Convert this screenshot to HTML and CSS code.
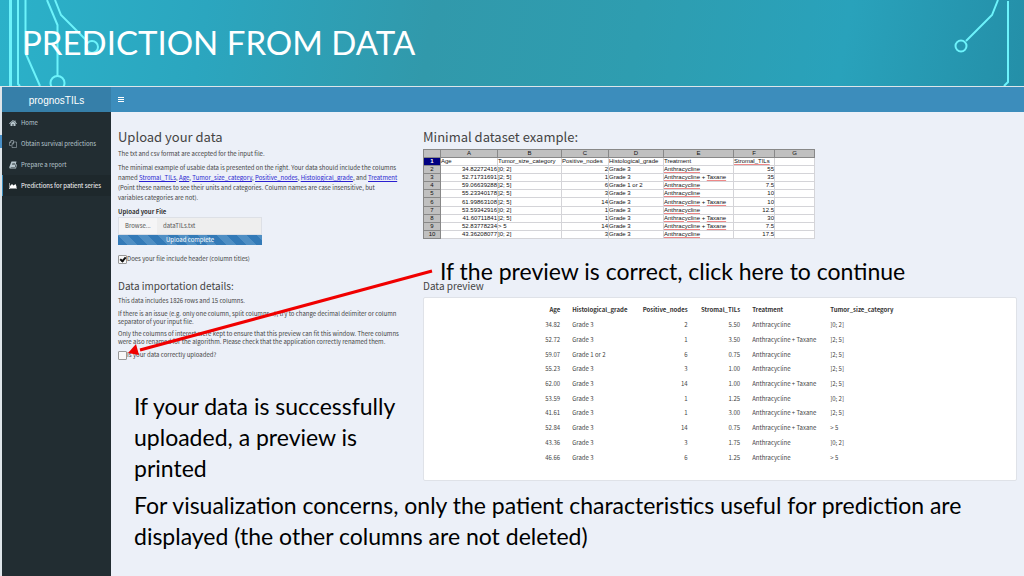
FILE: index.html
```
<!DOCTYPE html>
<html lang="en">
<head>
    <meta charset="utf-8">
    <title>Prediction from data</title>
    <link rel="stylesheet" href="styles.css">
</head>
<body>
    <header class="slide-header">
        <svg class="circuit circuit-left" width="110" height="86" viewBox="0 0 110 86">
            <path d="M10.500 0V86" stroke-width="3"/>
            <path d="M18 0V84l2 2M25.500 0V53L40 86M47 0l10.500 25v51M55 0l6 15 26 26"/>
            <circle cx="57.500" cy="83" r="7"/>
            <circle cx="92" cy="47" r="6"/>
        </svg>
        <h1>PREDICTION FROM DATA</h1>
        <svg class="circuit circuit-right" width="84" height="86" viewBox="0 0 84 86">
            <path d="M58 0l-6 15-26 26M68 1v81l-4 4"/>
            <circle cx="21" cy="46" r="5.500"/>
        </svg>
    </header>

    <div class="app">
        <aside class="sidebar">
            <div class="logo">prognosTILs</div>
            <nav>
                <a href="#home">
                    <svg viewBox="0 0 16 16"><path d="M8 2L0 9l1 1 7-6 7 6 1-1-3-3V3h-2v2zM8 5l-5 4v5h4v-4h2v4h4V9z"/></svg>
                    Home
                </a>
                <a href="#survival">
                    <svg viewBox="0 0 16 16" class="outline"><path d="M5 11H1V5l3-4h5v3M4 1v4H1M6 8l3-4h6v11H6zM9 4v4H6"/></svg>
                    Obtain survival predictions
                </a>
                <a href="#report">
                    <svg viewBox="0 0 16 16"><path d="M5 1h10l-3 11H4c-1 0-1 1 0 1h9l2-7 1 1-2 8H3c-2 0-3-1-2-4zM7 4l-1 1h6V4zM6 7v1h6V7z" fill-rule="evenodd"/></svg>
                    Prepare a report
                </a>
                <a href="#patients" class="active">
                    <svg viewBox="0 0 16 16"><path d="M0 2h1v11h15v1H0zM2 12V8l4-4 3 3 4-3 2 5v3z"/></svg>
                    Predictions for patient series
                </a>
            </nav>
        </aside>

        <div class="page">
            <div class="topbar">
                <button type="button" class="menu-btn" aria-label="Toggle menu"><span></span><span></span><span></span></button>
            </div>

            <main>
                <div class="columns">
                    <section class="upload">
                        <h2>Upload your data</h2>
                        <p>The txt and csv format are accepted for the input file.</p>
                        <p>The minimal example of usable data is presented on the right. Your data should include the columns<br>named <a href="#til">Stromal_TILs</a>, <a href="#age">Age</a>, <a href="#tumor">Tumor_size_category</a>, <a href="#nodes">Positive_nodes</a>, <a href="#grade">Histological_grade</a>, and <a href="#treatment">Treatment</a><br>(Point these names to see their units and categories. Column names are case insensitive, but<br>variables categories are not).</p>

                        <label class="file-label" for="fileName">Upload your File</label>
                        <div class="file-row">
                            <button type="button">Browse...</button>
                            <input type="text" id="fileName" value="dataTILs.txt" readonly>
                        </div>
                        <div class="progress">Upload complete</div>
                        <div class="check">
                            <input type="checkbox" id="hasHeader" checked>
                            <label for="hasHeader">Does your file include header (column titles)</label>
                        </div>

                        <h3>Data importation details:</h3>
                        <div class="details">
                            <p>This data includes 1826 rows and 15 columns.</p>
                            <p>If there is an issue (e.g. only one column, split columns...), try to change decimal delimiter or column<br>separator of your input file.</p>
                            <p>Only the columns of interest were kept to ensure that this preview can fit this window. There columns<br>were also renamed for the algorithm. Please check that the application correctly renamed them.</p>
                        </div>
                        <div class="check">
                            <input type="checkbox" id="uploadOk">
                            <label for="uploadOk">Is your data correctly uploaded?</label>
                        </div>

                        <div class="note">If your data is successfully uploaded, a preview is printed</div>
                    </section>

                    <section class="data">
                        <h2>Minimal dataset example:</h2>
                        <table class="sheet">
                            <colgroup>
                                <col class="c-row"><col class="c-age"><col class="c-tumor"><col class="c-nodes"><col class="c-grade"><col class="c-treat"><col class="c-til"><col class="c-empty">
                            </colgroup>
                            <thead>
                                <tr><th></th><th>A</th><th>B</th><th>C</th><th>D</th><th>E</th><th>F</th><th>G</th></tr>
                            </thead>
                            <tbody>
                                <tr><th class="selected">1</th><td>Age</td><td>Tumor_size_category</td><td>Positive_nodes</td><td>Histological_grade</td><td>Treatment</td><td><u>Stromal_TILs</u></td><td></td></tr>
                                <tr><th>2</th><td class="num">34.82272416</td><td>]0; 2]</td><td class="num">2</td><td>Grade 3</td><td><u>Anthracycline</u></td><td class="num">55</td><td></td></tr>
                                <tr><th>3</th><td class="num">52.71731691</td><td>]2; 5]</td><td class="num">1</td><td>Grade 3</td><td><u>Anthracycline</u> + <u>Taxane</u></td><td class="num">35</td><td></td></tr>
                                <tr><th>4</th><td class="num">59.06639288</td><td>]2; 5]</td><td class="num">6</td><td>Grade 1 or 2</td><td><u>Anthracycline</u></td><td class="num">7.5</td><td></td></tr>
                                <tr><th>5</th><td class="num">55.23340178</td><td>]2; 5]</td><td class="num">3</td><td>Grade 3</td><td><u>Anthracycline</u></td><td class="num">10</td><td></td></tr>
                                <tr><th>6</th><td class="num">61.99863108</td><td>]2; 5]</td><td class="num">14</td><td>Grade 3</td><td><u>Anthracycline</u> + <u>Taxane</u></td><td class="num">10</td><td></td></tr>
                                <tr><th>7</th><td class="num">53.59342916</td><td>]0; 2]</td><td class="num">1</td><td>Grade 3</td><td><u>Anthracycline</u></td><td class="num">12.5</td><td></td></tr>
                                <tr><th>8</th><td class="num">41.60711841</td><td>]2; 5]</td><td class="num">1</td><td>Grade 3</td><td><u>Anthracycline</u> + <u>Taxane</u></td><td class="num">30</td><td></td></tr>
                                <tr><th>9</th><td class="num">52.83778234</td><td>&gt; 5</td><td class="num">14</td><td>Grade 3</td><td><u>Anthracycline</u> + <u>Taxane</u></td><td class="num">7.5</td><td></td></tr>
                                <tr><th>10</th><td class="num">43.36208077</td><td>]0; 2]</td><td class="num">3</td><td>Grade 3</td><td><u>Anthracycline</u></td><td class="num">17.5</td><td></td></tr>
                            </tbody>
                        </table>

                        <h3>Data preview</h3>
                        <div class="preview">
                            <table>
                                <thead>
                                    <tr><th class="num">Age</th><th>Histological_grade</th><th class="num">Positive_nodes</th><th class="num">Stromal_TILs</th><th>Treatment</th><th>Tumor_size_category</th></tr>
                                </thead>
                                <tbody>
                                    <tr><td class="num">34.82</td><td>Grade 3</td><td class="num">2</td><td class="num">5.50</td><td>Anthracycline</td><td>]0; 2]</td></tr>
                                    <tr><td class="num">52.72</td><td>Grade 3</td><td class="num">1</td><td class="num">3.50</td><td>Anthracycline + Taxane</td><td>]2; 5]</td></tr>
                                    <tr><td class="num">59.07</td><td>Grade 1 or 2</td><td class="num">6</td><td class="num">0.75</td><td>Anthracycline</td><td>]2; 5]</td></tr>
                                    <tr><td class="num">55.23</td><td>Grade 3</td><td class="num">3</td><td class="num">1.00</td><td>Anthracycline</td><td>]2; 5]</td></tr>
                                    <tr><td class="num">62.00</td><td>Grade 3</td><td class="num">14</td><td class="num">1.00</td><td>Anthracycline + Taxane</td><td>]2; 5]</td></tr>
                                    <tr><td class="num">53.59</td><td>Grade 3</td><td class="num">1</td><td class="num">1.25</td><td>Anthracycline</td><td>]0; 2]</td></tr>
                                    <tr><td class="num">41.61</td><td>Grade 3</td><td class="num">1</td><td class="num">3.00</td><td>Anthracycline + Taxane</td><td>]2; 5]</td></tr>
                                    <tr><td class="num">52.84</td><td>Grade 3</td><td class="num">14</td><td class="num">0.75</td><td>Anthracycline + Taxane</td><td>&gt; 5</td></tr>
                                    <tr><td class="num">43.36</td><td>Grade 3</td><td class="num">3</td><td class="num">1.75</td><td>Anthracycline</td><td>]0; 2]</td></tr>
                                    <tr><td class="num">46.66</td><td>Grade 3</td><td class="num">6</td><td class="num">1.25</td><td>Anthracycline</td><td>&gt; 5</td></tr>
                                </tbody>
                            </table>
                        </div>
                        <p class="callout">If the preview is correct, click here to continue</p>
                    </section>

                    <svg class="arrow" width="310" height="100" viewBox="0 0 310 100">
                        <path d="M306 9L14 88" stroke="#f00000" stroke-width="3"/>
                        <path d="M2 91l8-9 3 11z" fill="#f00000"/>
                    </svg>
                </div>

                <div class="note">For visualization concerns, only the patient characteristics useful for prediction are displayed (the other columns are not deleted)</div>
            </main>
        </div>
    </div>
</body>
</html>
```
FILE: styles.css
```
*, *::before {
    box-sizing: border-box;
}
body {
    margin: 0;
    min-height: 100vh;
    display: flex;
    flex-direction: column;
    font-family: 'Noto Sans CJK SC', 'Noto Sans', sans-serif;
    font-size: 6px;
    line-height: 10px;
    color: #444;
    background: #ecf0f8;
}
h1, h2, h3, p {
    margin: 0;
    font-weight: 400;
}

/* slide title */
.slide-header {
    position: relative;
    height: 86px;
    padding: 0 22px;
    display: flex;
    align-items: center;
    background: linear-gradient(100deg, #2bb1c9 0%, #2ba6bf 20%, #3199ab 42%, #2e9db0 62%, #29a2bb 82%, #248fa8 100%);
}
.slide-header h1 {
    position: relative;
    font-family: Lato, sans-serif;
    font-size: 33px;
    line-height: 40px;
    padding-bottom: 2px;
    color: #fff;
}
.circuit {
    position: absolute;
    top: 0;
    fill: none;
    stroke: #6df3fb;
    stroke-width: 2;
}
.circuit-left {
    left: 0;
}
.circuit-right {
    right: 0;
}

/* app shell */
.app {
    flex: 1;
    display: flex;
    padding-left: 2px;
    border-top: 1px solid #dde6ea;
    background: linear-gradient(#dfe5ea 48px, #4a90c8 48px 61px, #dfe5ea 61px);
}
.sidebar {
    width: 109px;
    flex-shrink: 0;
    background: #222d32;
}
.logo {
    height: 25px;
    font: 10px/27px 'Liberation Sans', sans-serif;
    text-align: center;
    color: #fff;
    background: #367fa9;
}
.sidebar a {
    display: flex;
    align-items: center;
    gap: 4px;
    height: 21px;
    padding-left: 6px;
    border-left: 1px solid transparent;
    color: #b8c7ce;
    text-decoration: none;
    white-space: nowrap;
}
.sidebar a.active {
    color: #fff;
    background: #1e282c;
    border-left-color: #3c8dbc;
}
.sidebar svg {
    width: 8px;
    height: 8px;
    flex-shrink: 0;
    fill: currentColor;
}
.sidebar svg.outline {
    fill: none;
    stroke: currentColor;
    stroke-width: 1;
}
.page {
    flex: 1;
    min-width: 0;
    background: #ecf0f8;
}
.topbar {
    height: 25px;
    padding-left: 7px;
    display: flex;
    align-items: center;
    background: #3c8dbc;
}
.menu-btn {
    display: flex;
    flex-direction: column;
    gap: 1px;
    width: 6px;
    padding: 0;
    border: none;
    background: none;
}
.menu-btn span {
    height: 1px;
    background: #fff;
}
main {
    padding: 16px 7px;
}
.columns {
    position: relative;
    display: grid;
    grid-template-columns: 290px 1fr;
    gap: 15px;
}
h2 {
    font-size: 13px;
    line-height: 18px;
    margin-bottom: 3px;
}
h3 {
    font-size: 10px;
    line-height: 18px;
}

/* upload form */
.upload p {
    margin-bottom: 4px;
}
.upload a {
    color: #2a1fd0;
    text-decoration: underline;
}
.file-label {
    display: block;
    font-weight: 700;
    color: #333;
}
.file-row {
    display: flex;
    width: 144px;
    height: 18px;
    border: 1px solid #dde0e6;
}
.file-row button, .file-row input {
    min-width: 0;
    padding: 0 6px;
    border: none;
    font: inherit;
    text-align: left;
    color: #555;
    background: #eee;
}
.file-row button {
    width: 38px;
    background: #f5f5f6;
}
.file-row input {
    flex: 1;
}
.progress {
    width: 144px;
    margin-bottom: 9px;
    color: #fff;
    text-align: center;
    background: repeating-linear-gradient(45deg, #337ab7 0 7px, #4f8fc4 7px 14px);
}
.check {
    display: flex;
    height: 10px;
    margin-bottom: 13px;
}
.check input {
    appearance: none;
    width: 9px;
    height: 9px;
    margin: 1px 0 0;
    border: 1px solid #999;
    border-radius: 1px;
    background: #f8f8f8;
}
.check input:checked::before {
    content: "";
    display: block;
    width: 4px;
    height: 6px;
    margin-left: 2px;
    border: solid #111;
    border-width: 0 2px 2px 0;
    transform: rotate(40deg);
}
.details {
    padding-top: 1px;
}
.details p {
    line-height: 8px;
    margin-bottom: 4px;
}
.details p:first-child {
    line-height: 10px;
}

/* spreadsheet example */
.sheet {
    width: 391px;
    height: 90px;
    margin-bottom: 38px;
    table-layout: fixed;
    border-collapse: collapse;
    font: 6px/7px 'Liberation Sans', sans-serif;
    color: #111;
    background: #fff;
}
.sheet th, .sheet td {
    padding: 0;
    border: 1px solid #d4d4d8;
    text-align: left;
    white-space: nowrap;
}
.sheet th {
    border-color: #888;
    font-weight: 400;
    text-align: center;
    background: #c0c0c0;
}
.sheet th.selected {
    color: #fff;
    font-weight: 700;
    background: #000080;
}
.sheet u {
    text-decoration: underline #e88;
}
.sheet .num, .preview .num {
    text-align: right;
}
.c-row { width: 17px; }
.c-age { width: 57px; }
.c-tumor { width: 64px; }
.c-nodes { width: 47px; }
.c-grade { width: 55px; }
.c-treat { width: 70px; }
.c-til { width: 41px; }
.c-empty { width: 40px; }

/* preview table */
.preview {
    margin-top: 2px;
    padding: 4px 0 15px;
    border: 1px solid #dfe2e8;
    border-radius: 2px;
    background: #fff;
}
.preview table {
    width: 363px;
    height: 163px;
    margin: 0 auto;
    border-collapse: collapse;
}
.preview th, .preview td {
    height: 14px;
    padding: 0 6px;
    text-align: left;
}
.preview th {
    height: 16px;
    color: #333;
}

/* slide annotations */
.note, .callout {
    font-family: Lato, sans-serif;
    font-size: 23px;
    line-height: 31px;
    color: #000;
}
.note {
    padding-left: 16px;
}
.upload .note {
    margin-top: 31px;
}
.columns + .note {
    margin-top: 6px;
}
.callout {
    position: absolute;
    top: 128px;
    left: 322px;
    white-space: nowrap;
}
.arrow {
    position: absolute;
    top: 134px;
    left: 8px;
    fill: none;
}
```
